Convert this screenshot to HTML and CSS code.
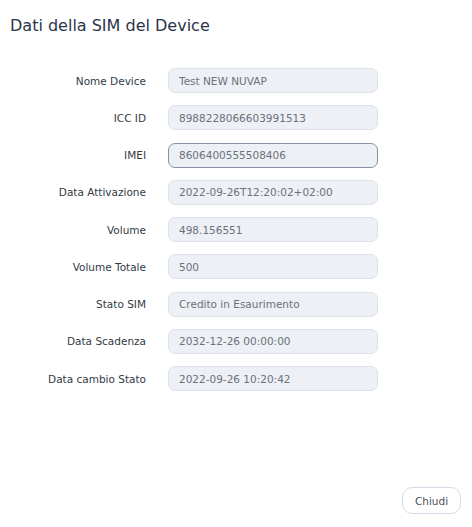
FILE: index.html
```html
<!DOCTYPE html>
<html lang="it">
<head>
<meta charset="utf-8">
<title>Dati della SIM del Device</title>
<link rel="stylesheet" href="styles.css">
</head>
<body>
<div class="modal">
  <h1 class="title">Dati della SIM del Device</h1>
  <form class="form">
    <label class="lbl">Nome Device</label><input class="fld" value="Test NEW NUVAP" readonly>
    <label class="lbl">ICC ID</label><input class="fld" value="8988228066603991513" readonly>
    <label class="lbl">IMEI</label><input class="fld focus" value="8606400555508406" readonly>
    <label class="lbl">Data Attivazione</label><input class="fld" value="2022-09-26T12:20:02+02:00" readonly>
    <label class="lbl">Volume</label><input class="fld" value="498.156551" readonly>
    <label class="lbl">Volume Totale</label><input class="fld" value="500" readonly>
    <label class="lbl">Stato SIM</label><input class="fld" value="Credito in Esaurimento" readonly>
    <label class="lbl">Data Scadenza</label><input class="fld" value="2032-12-26 00:00:00" readonly>
    <label class="lbl">Data cambio Stato</label><input class="fld" value="2022-09-26 10:20:42" readonly>
  </form>
  <div class="footer">
    <button class="btn" type="button">Chiudi</button>
  </div>
</div>
</body>
</html>
```
FILE: styles.css
```css
html, body {
  margin: 0;
  padding: 0;
  background: #ffffff;
}
body {
  font-family: "DejaVu Sans", sans-serif;
  width: 472px;
  height: 527px;
  overflow: hidden;
}
.modal {
  display: flex;
  flex-direction: column;
  height: 527px;
}
.title {
  margin: 0;
  padding: 16px 0 0 10px;
  font-size: 16px;
  font-weight: 400;
  line-height: 20px;
  color: #2a3547;
}
.form {
  display: grid;
  grid-template-columns: 146px 210px;
  column-gap: 22px;
  row-gap: 12.25px;
  margin-top: 32px;
  align-items: center;
}
.lbl {
  text-align: right;
  font-size: 10.5px;
  color: #333a45;
}
.fld {
  box-sizing: border-box;
  height: 25px;
  width: 210px;
  margin: 0;
  padding: 0 0 0 10px;
  border: 1px solid #dde2ea;
  border-radius: 7px;
  background: #edf0f5;
  font-family: inherit;
  font-size: 10.5px;
  color: #6c717b;
  outline: none;
}
.fld.focus {
  border-color: #8690a5;
}
.footer {
  margin-top: auto;
  display: flex;
  justify-content: flex-end;
  padding: 0 11px 13px 0;
}
.btn {
  box-sizing: border-box;
  width: 59px;
  height: 27px;
  border: 1px solid #d5dce8;
  border-radius: 10px;
  background: #ffffff;
  font-family: inherit;
  font-size: 10.5px;
  color: #4a505a;
  padding: 0;
}
```
